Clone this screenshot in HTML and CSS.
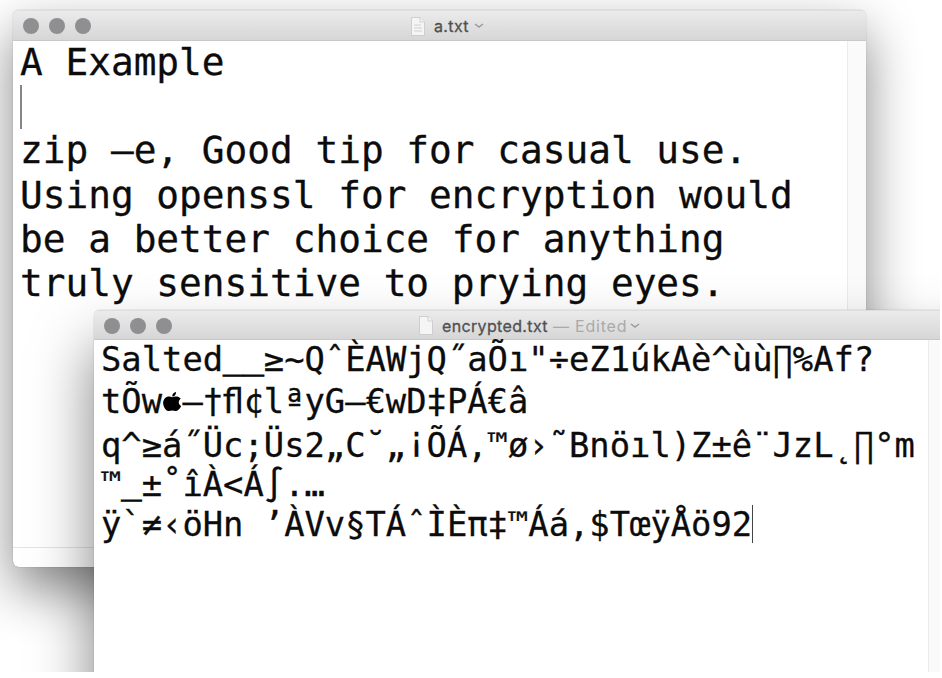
FILE: index.html
```html
<!DOCTYPE html>
<html lang="en">
<head>
<meta charset="utf-8">
<title>Text windows</title>
<link rel="stylesheet" href="styles.css">
</head>
<body>
<main class="desktop">
  <section class="window window-back">
    <header class="titlebar">
      <div class="lights"><i></i><i></i><i></i></div>
      <div class="title">
        <svg class="doc" viewBox="0 0 14 19"><path d="M.5.5h8.5l4.5 4.5v13.5h-13z"/><path d="M9 .5v4.500h4.500M3 8h7M3 11h8M3 14h8"/></svg>
        <span class="name">a.txt</span>
        <svg class="chevron" viewBox="0 0 10 6"><path d="M1 1l4 3 4-3"/></svg>
      </div>
    </header>
    <div class="body">
      <div class="text">
        <div class="line">A Example</div>
        <div class="line"><span class="caret"></span></div>
        <div class="line">zip –e, Good tip for casual use.</div>
        <div class="line">Using openssl for encryption would</div>
        <div class="line">be a better choice for anything</div>
        <div class="line">truly sensitive to prying eyes.</div>
      </div>
      <div class="scroll"></div>
    </div>
    <footer class="statusbar"></footer>
  </section>

  <section class="window window-front">
    <header class="titlebar">
      <div class="lights"><i></i><i></i><i></i></div>
      <div class="title">
        <svg class="doc" viewBox="0 0 14 19"><path d="M.5.5h8.5l4.5 4.5v13.5h-13z"/><path d="M9 .5v4.500h4.500"/></svg>
        <span class="name">encrypted.txt</span>
        <span class="edited">— Edited</span>
        <svg class="chevron" viewBox="0 0 10 6"><path d="M1 1l4 3 4-3"/></svg>
      </div>
    </header>
    <div class="body">
      <div class="text">
        <div class="line">Salted<span class="under">__</span>≥~QˆÈAWjQ˝aÕı"÷eZ1úkAè^ùù∏%Af?</div>
        <div class="line tall">tÕw<svg class="apple" viewBox="0 0 20 20"><path d="M10 5.300C7 3.500 2 4.500 1 10c-.3 4 2.200 8.500 5 9 1.500.2 2.800-.4 4.200-.4s2.200.6 3.700.4c2-.3 4.200-2.700 5.100-5-3-1.500-3.200-5.500-.4-7.200-2-2.800-6.100-2.500-8.600-1.500zM10 4.600c0-2.400 1.600-4.200 3.900-4.500.1 2.400-1.600 4.500-3.900 4.500z"/></svg>–†ﬂ¢lªyG—€wD‡PÁ€â</div>
        <div class="line tallest">q^≥á˝Üc;Üs2„C˘„<span class="cap">¡</span>ÕÁ,™ø›˜Bnöıl)Z±ê¨JzL˛∏°m</div>
        <div class="line">™<span class="under">_</span>±˚îÀ&lt;Á∫.…</div>
        <div class="line">ÿ`≠‹öHn ’ÀVv§TÁˆÌÈπ‡™Áá‚$TœÿÅö92<span class="caret"></span></div>
      </div>
      <div class="scroll"></div>
    </div>
  </section>
</main>
</body>
</html>
```
FILE: styles.css
```css
* { box-sizing: border-box; }

body {
  margin: 0;
  background: #fff;
}

.desktop {
  position: relative;
  width: 940px;
  height: 672px;
  overflow: hidden;
  background: #fff;
}

.window {
  position: absolute;
  display: flex;
  flex-direction: column;
  background: #fff;
  overflow: hidden;
}

.window-back {
  left: 13px;
  top: 10px;
  width: 853px;
  height: 557px;
  border-radius: 6px;
  box-shadow: 0 0 1px rgba(0, 0, 0, .45), 0 22px 52px rgba(0, 0, 0, .48);
}

.window-front {
  left: 94px;
  top: 310px;
  width: 900px;
  height: 520px;
  border-radius: 6px 6px 0 0;
  box-shadow: 0 0 1px rgba(0, 0, 0, .5), 0 36px 60px rgba(0, 0, 0, .5);
}

.titlebar {
  flex: none;
  display: flex;
  align-items: center;
  height: 31px;
  padding: 1px 0 0 10px;
  border-top: 1px solid #dedede;
  border-bottom: 1px solid #c9c9c9;
  background: linear-gradient(#ebebeb, #d6d6d6);
}

.window-front .titlebar {
  height: 30px;
}

.lights {
  display: flex;
  gap: 10px;
}

.lights i {
  width: 16px;
  height: 16px;
  border-radius: 50%;
  background: #8f8f92;
}

.title {
  display: flex;
  align-items: center;
  margin-left: 320px;
  font: 16px/20px Inter, "Liberation Sans", sans-serif;
  color: #505050;
}

.window-front .title {
  margin-left: 247px;
}

.doc {
  width: 14px;
  height: 19px;
  margin-right: 9px;
  fill: #f5f5f5;
  stroke: #c6c6c6;
  stroke-width: .8;
}

.name {
  letter-spacing: .35px;
  -webkit-text-stroke: .3px #505050;
}

.edited {
  margin-left: 5px;
  letter-spacing: .8px;
  color: #aaa;
}

.chevron {
  width: 10px;
  height: 6px;
  margin-left: 5px;
  fill: none;
  stroke: #999;
  stroke-width: 1.4;
}

.edited + .chevron {
  margin-left: 3px;
}

.body {
  flex: 1;
  display: flex;
  min-height: 0;
}

.text {
  flex: 1;
  padding-left: 7px;
  font-family: "DejaVu Sans Mono", monospace;
  color: #0c0c0c;
  -webkit-text-stroke: .3px #0c0c0c;
  font-variant-ligatures: none;
}

.line {
  white-space: pre;
}

.window-back .text {
  font-size: 37.75px;
}

.window-back .line {
  height: 44.2px;
  line-height: 43.8px;
}

.window-front .text {
  font-size: 33.8px;
}

.window-front .line {
  display: flex;
  height: 39.300px;
  line-height: 39.300px;
}

.window-front .tall {
  height: 41px;
  line-height: 45px;
}

.window-front .tallest {
  height: 45px;
  line-height: 52px;
}

.under {
  transform: translateY(-3px);
  -webkit-text-stroke-width: 1px;
}

.cap {
  transform: translateY(-6px);
}

.caret {
  display: block;
  width: 2px;
  height: 44px;
  background: #858585;
}

.window-front .caret {
  width: 1px;
  height: 38px;
  background: #444;
}

.apple {
  width: 20.35px;
  height: 20px;
  margin-top: 13px;
  fill: #000;
}

.scroll {
  flex: none;
  width: 19px;
  background: #fafafa;
  border-left: 1px solid #ececec;
}

.window-front .scroll {
  width: 66px;
}

.statusbar {
  flex: none;
  height: 20px;
  border-top: 1px solid #e4e4e4;
}
```
